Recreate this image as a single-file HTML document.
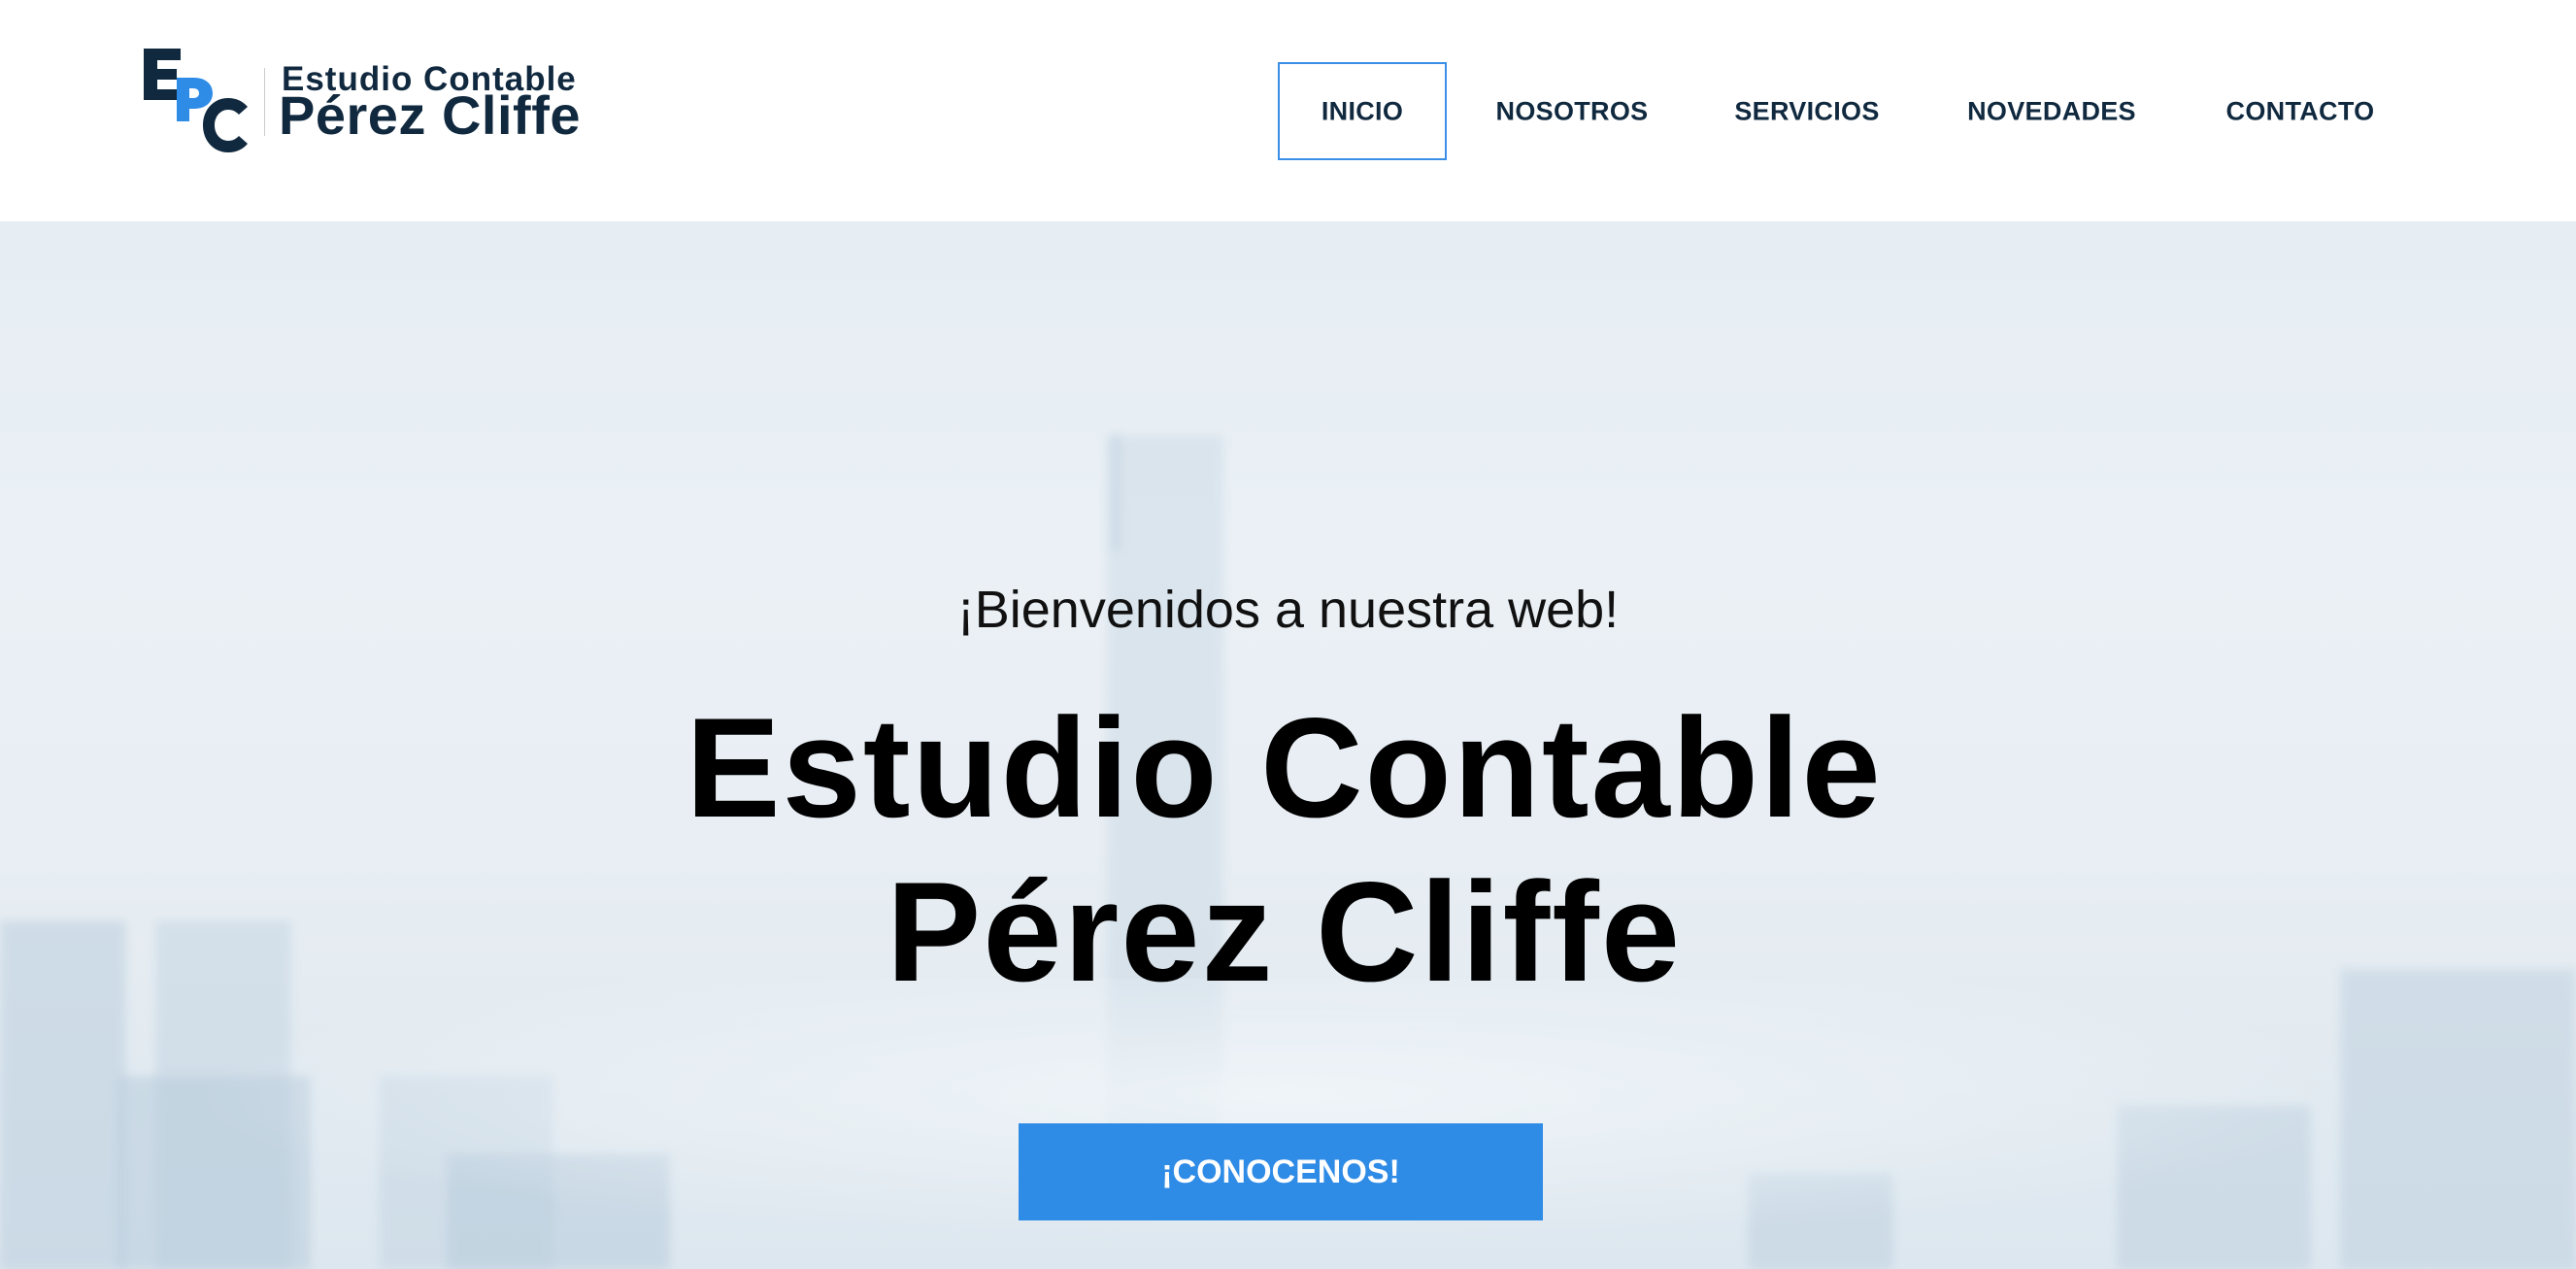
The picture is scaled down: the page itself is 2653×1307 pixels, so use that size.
<!DOCTYPE html>
<html><head><meta charset="utf-8"><style>
*{margin:0;padding:0;box-sizing:border-box}
body{width:2653px;height:1307px;overflow:hidden;background:#fff;font-family:"Liberation Sans",sans-serif}
header{position:absolute;left:0;top:0;width:2653px;height:228px;background:#fff}
.nav a{position:absolute;top:115px;transform:translate(-50%,-50%);font-weight:bold;font-size:27px;color:#10293f;text-decoration:none;letter-spacing:0.3px}
.box{position:absolute;left:1316px;top:64px;width:174px;height:101px;border:2px solid #3a8ee6}
.hero{position:absolute;left:0;top:228px;width:2653px;height:1079px;background:linear-gradient(#e6edf3 0%,#eaf0f5 30%,#e8eef3 60%,#dde7ef 100%);overflow:hidden}
.b{position:absolute;background:#b9cddd;opacity:.5;filter:blur(5px)}
.t{position:absolute;left:0;width:2653px;text-align:center;color:#000}
</style></head><body>
<header>
<svg style="position:absolute;left:145px;top:48px" width="120" height="112" viewBox="0 0 120 112">
<path d="M3 2h38v12H17v9h20v11H17v10h24v11H3z" fill="#11293f"/>
<path d="M37 32h18c12 0 19 7 19 16s-7 16-19 16h-5v13H37z M50 43v10h4c4 0 6-2 6-5s-2-5-6-5z" fill="#2e8be6"/>
<path d="M110 62c-5-6-12-9-20-9-15 0-26 12-26 28s11 28 26 28c8 0 15-3 20-9l-9-8c-3 3-6 5-11 5-8 0-14-7-14-16s6-16 14-16c5 0 8 2 11 5z" fill="#11293f"/>
</svg>
<div style="position:absolute;left:272px;top:70px;width:1px;height:70px;background:#ccc"></div>
<div style="position:absolute;left:290px;top:62px;font-weight:bold;font-size:35px;color:#11293f;letter-spacing:1px">Estudio Contable</div>
<div style="position:absolute;left:287px;top:86px;font-weight:bold;font-size:56px;color:#11293f;letter-spacing:0.5px">Pérez Cliffe</div>
<div class="box"></div>
<div class="nav">
<a style="left:1403px">INICIO</a><a style="left:1619px">NOSOTROS</a><a style="left:1861px">SERVICIOS</a><a style="left:2113px">NOVEDADES</a><a style="left:2369px">CONTACTO</a>
</div>
</header>
<div class="hero">
<div class="b" style="left:1140px;top:220px;width:120px;height:780px;opacity:.3"></div>
<div class="b" style="left:1143px;top:220px;width:12px;height:120px;opacity:.35"></div>
<div class="b" style="left:0;top:720px;width:130px;height:360px"></div>
<div class="b" style="left:160px;top:720px;width:140px;height:360px;opacity:.4"></div>
<div class="b" style="left:120px;top:880px;width:200px;height:200px;opacity:.55"></div>
<div class="b" style="left:390px;top:880px;width:180px;height:200px;opacity:.35"></div>
<div class="b" style="left:460px;top:960px;width:230px;height:120px;opacity:.55"></div>
<div class="b" style="left:1800px;top:980px;width:150px;height:100px;opacity:.45"></div>
<div class="b" style="left:2180px;top:910px;width:200px;height:170px;opacity:.45"></div>
<div class="b" style="left:2410px;top:770px;width:243px;height:310px;opacity:.45"></div>
<div style="position:absolute;left:0;top:780px;width:2653px;height:300px;background:radial-gradient(ellipse at 50% 40%,rgba(240,245,249,.9),rgba(240,245,249,0) 60%)"></div>
<div class="t" style="top:365px;font-size:54px;font-weight:300;line-height:70px;color:#111">¡Bienvenidos a nuestra web!</div>
<div class="t" style="top:478px;left:-4px;font-size:146px;font-weight:bold;line-height:169px;letter-spacing:2px">Estudio Contable<br>Pérez Cliffe</div>
<div style="position:absolute;left:1049px;top:929px;width:540px;height:100px;background:#2e8be6;color:#fff;font-weight:bold;font-size:34px;line-height:100px;text-align:center">¡CONOCENOS!</div>
</div>
</body></html>
